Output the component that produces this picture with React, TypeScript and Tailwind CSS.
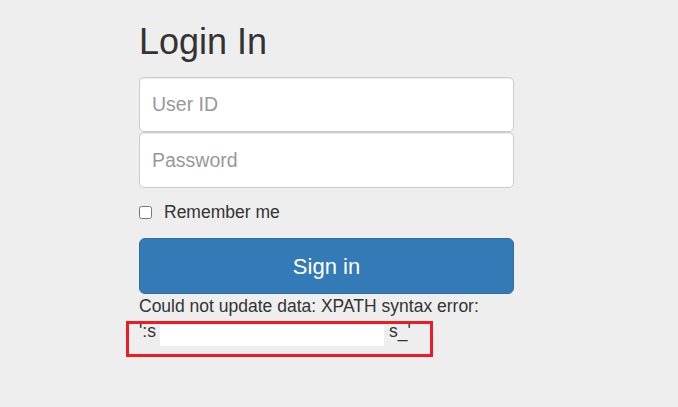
export default function App() {
  return (
    <div className="min-h-[407px] bg-[#eeeeee] pr-[25px] pt-[22px] font-['Liberation_Sans',Arial,sans-serif] text-[#333333]">
      <form className="mx-auto flex w-[375px] flex-col" onSubmit={(e) => e.preventDefault()}>
        <h1 className="text-[36px] leading-[40px] font-normal">Login In</h1>

        <input
          type="text"
          placeholder="User ID"
          className="mt-[15px] h-[55px] w-full rounded-[5px] border border-[#cccccc] bg-white px-[12px] text-[19.5px] shadow-[inset_0_1px_1px_rgba(0,0,0,0.075)] placeholder:text-[#999999] focus:outline-none"
        />
        <input
          type="password"
          placeholder="Password"
          className="h-[56px] w-full rounded-[5px] border border-[#cccccc] bg-white px-[12px] text-[19.5px] shadow-[inset_0_1px_1px_rgba(0,0,0,0.075)] placeholder:text-[#999999] focus:outline-none"
        />

        <label className="mt-[14px] flex h-[20px] items-center text-[17.5px]">
          <input type="checkbox" className="m-0 h-[13px] w-[13px]" />
          <span className="ml-[12px]">Remember me</span>
        </label>

        <button
          type="submit"
          className="mt-[16px] h-[56px] w-full rounded-[6px] border border-[#2e6da4] bg-[#337ab7] text-[22px] text-white"
        >
          Sign in
        </button>

        <div className="text-[17.5px] leading-[24px]">Could not update data: XPATH syntax error:</div>
        <div className="mt-[3px] -ml-[13px] flex h-[36px] w-[307px] items-start border-[3px] border-[#ed1c24] pl-[10px] text-[17.5px] leading-[15px]">
          <span>':s</span>
          <span className="mt-[1px] ml-[4px] h-[21px] w-[224px] bg-white"></span>
          <span className="ml-[5px]">s_'</span>
        </div>
      </form>
    </div>
  );
}
